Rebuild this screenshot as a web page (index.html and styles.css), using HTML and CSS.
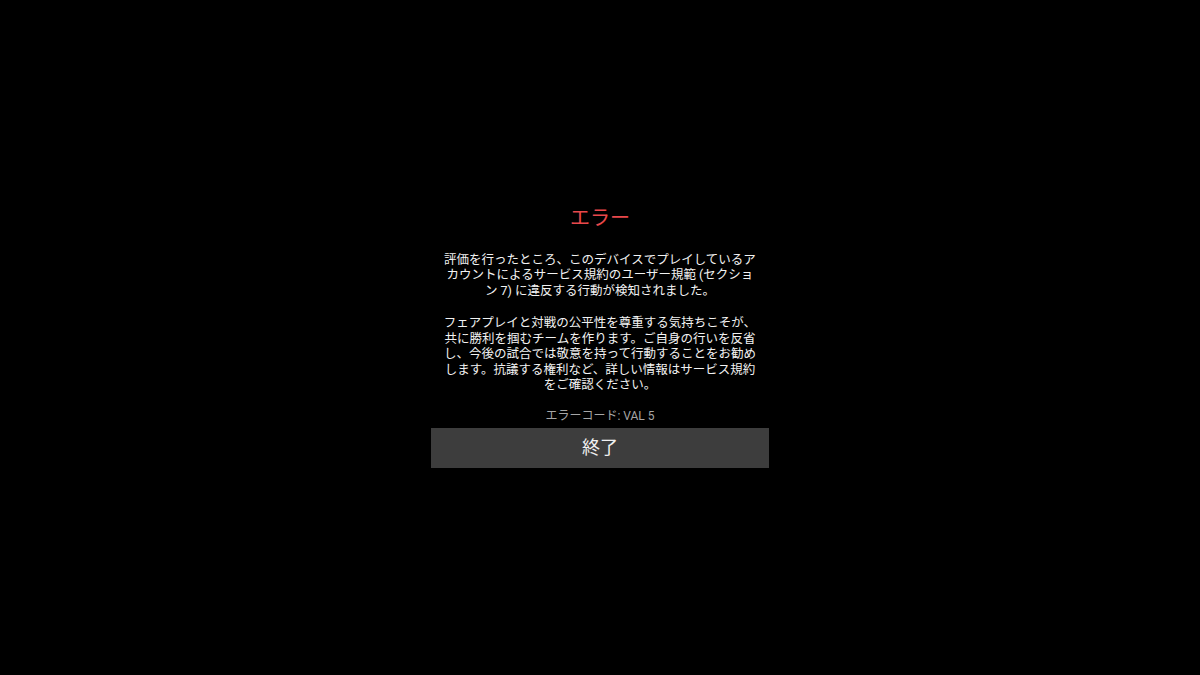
FILE: index.html
```html
<!DOCTYPE html>
<html lang="ja">
<head>
<meta charset="utf-8">
<title>エラー</title>
<link rel="stylesheet" href="styles.css">
</head>
<body>
<main class="screen">
  <section class="dialog">
    <h1 class="title">エラー</h1>
    <div class="body">
      <p class="para">評価を行ったところ、このデバイスでプレイしているアカウントによるサービス規約のユーザー規範 (セクション 7) に違反する行動が検知されました。</p>
      <p class="para">フェアプレイと対戦の公平性を尊重する気持ちこそが、共に勝利を掴むチームを作ります。ご自身の行いを反省し、今後の試合では敬意を持って行動することをお勧めします。抗議する権利など、詳しい情報はサービス規約をご確認ください。</p>
    </div>
    <div class="code">エラーコード: VAL 5</div>
    <button class="quit" type="button">終了</button>
  </section>
</main>
</body>
</html>
```

FILE: styles.css
```css
html, body {
  margin: 0;
  padding: 0;
  background: #000;
  height: 100%;
}
body {
  font-family: Roboto, "Noto Sans CJK JP", sans-serif;
  color: #fff;
}
.screen {
  height: 675px;
  display: flex;
  align-items: center;
  justify-content: center;
}
.dialog {
  width: 338px;
  padding-bottom: 2px;
  display: flex;
  flex-direction: column;
  align-items: center;
}
.title {
  margin: 0 0 22px;
  font-size: 20px;
  line-height: 24px;
  font-weight: 400;
  color: #e8484b;
}
.body {
  width: 316px;
  text-align: center;
}
.para {
  margin: 0;
  font-size: 12.5px;
  line-height: 15.5px;
  color: #f2f2f2;
}
.para + .para {
  margin-top: 17px;
}
.code {
  margin-top: 15px;
  font-size: 12px;
  line-height: 16px;
  color: #a6a6a6;
}
.quit {
  margin-top: 4px;
  width: 338px;
  height: 40px;
  border: 0;
  background: #3d3d3d;
  color: #f0f0f0;
  font-family: Roboto, "Noto Sans CJK JP", sans-serif;
  font-size: 18px;
  padding: 0 0 3px;
}
```
